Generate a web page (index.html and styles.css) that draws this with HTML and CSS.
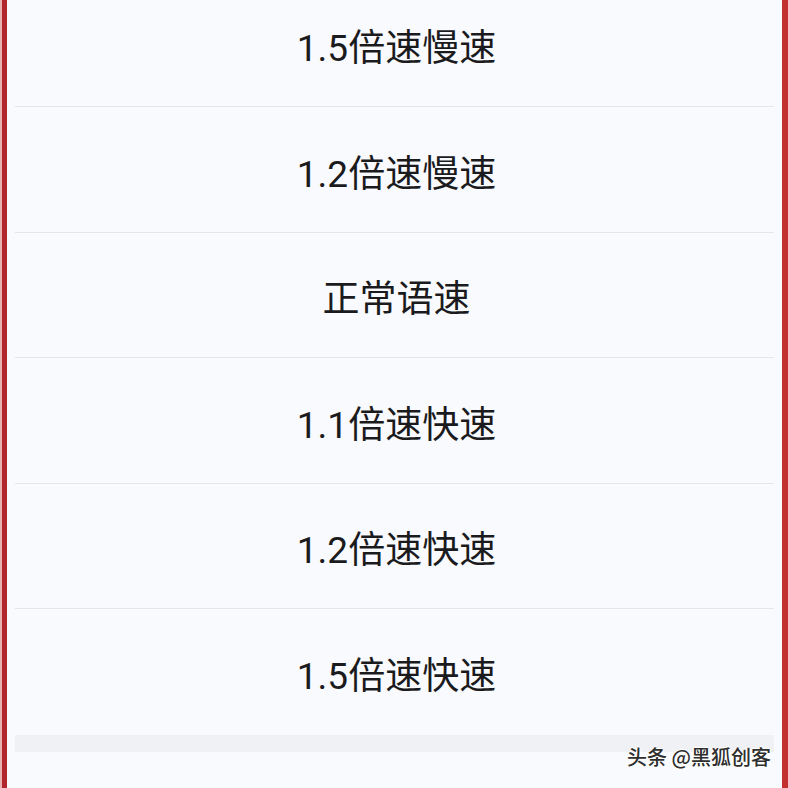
FILE: index.html
```html
<!DOCTYPE html>
<html lang="zh-CN">
<head>
<meta charset="utf-8">
<link rel="stylesheet" href="styles.css">
</head>
<body>
<div class="frame">
  <div class="panel">
    <ul class="list">
      <li class="item"><span>1.5倍速慢速</span></li>
      <li class="item"><span>1.2倍速慢速</span></li>
      <li class="item"><span>正常语速</span></li>
      <li class="item"><span>1.1倍速快速</span></li>
      <li class="item"><span>1.2倍速快速</span></li>
      <li class="item last"><span>1.5倍速快速</span></li>
    </ul>
    <div class="band"></div>
    <div class="tail"></div>
    <div class="watermark">头条 @黑狐创客</div>
  </div>
</div>
</body>
</html>
```

FILE: styles.css
```css
html, body {
  margin: 0;
  padding: 0;
  height: 100%;
  overflow: hidden;
  background: #f9fafd;
}
.frame {
  height: 788px;
  border-left: 2px solid #eab1b1;
  box-sizing: border-box;
}
.panel {
  position: relative;
  height: 100%;
  border-left: 5px solid #b0262c;
  border-right: 6px solid #c2302f;
  background: #f9fafd;
  overflow: hidden;
  font-family: Roboto, "Noto Sans CJK SC", sans-serif;
}
.list {
  list-style: none;
  margin: -18.5px 0 0 0;
  padding: 0 8px;
}
.item {
  display: flex;
  align-items: center;
  justify-content: center;
  font-size: 37px;
  color: #1b1b1d;
  padding-top: 3px;
  box-sizing: border-box;
  height: 125.5px;
  border-bottom: 1px solid #e4e6ec;
}
.item span {
  position: relative;
  left: 2px;
}
.item.last {
  border-bottom: none;
}
.band {
  height: 17px;
  margin: 0 8px;
  background: #f0f1f5;
}
.tail {
  height: 60px;
  background: #f9fafd;
}
.watermark {
  position: absolute;
  right: 11px;
  bottom: 17px;
  font-family: "Noto Sans CJK SC", sans-serif;
  font-size: 20px;
  font-weight: 500;
  color: #2e2e2e;
  text-shadow: 1px 1px 0 #ffffff, -1px 0 0 #ffffff, 0 -1px 0 #ffffff;
}
```
